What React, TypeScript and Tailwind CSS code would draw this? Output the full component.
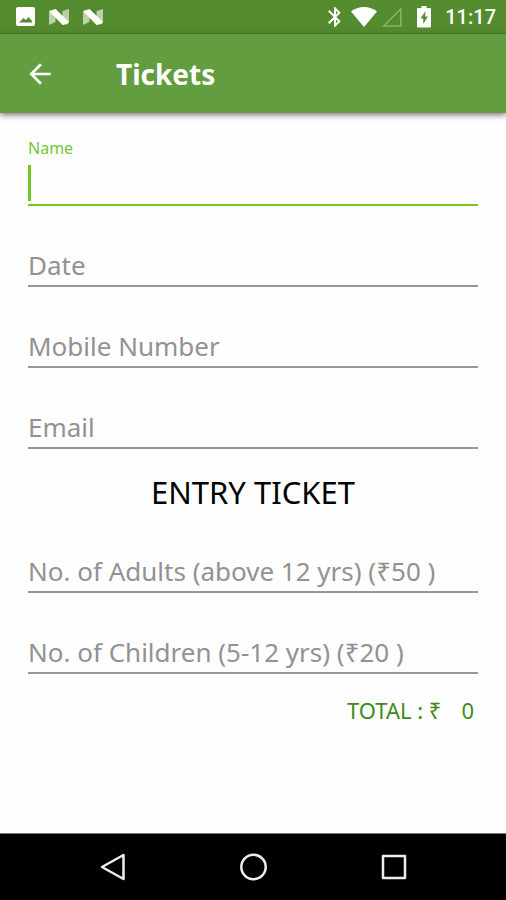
import React from 'react';
import { MdArrowBack, MdBluetooth } from 'react-icons/md';

const NougatIcon = () => (
  <svg className="h-[18px] w-[22px]" viewBox="0 0 22 18" fill="#fff">
    <path d="M1 3.5V17l6.500-3V5z" opacity=".6" />
    <path d="M14.500 3 21 1v13l-6.500-2z" opacity=".6" />
    <path d="M1 3 7.500 1 21 14l-1.500 2-5 1z" />
  </svg>
);

const StatusBar = () => (
  <div className="flex h-[34px] items-center justify-between border-b border-[#4c802b] bg-[#558b2f] pr-[10px] pl-4 text-white">
    <div className="flex items-center gap-3">
      <svg className="mr-px h-[19px] w-[19px]" viewBox="0 0 19 19" fill="#fff">
        <path
          fillRule="evenodd"
          d="M2 0h15a2 2 0 0 1 2 2v15a2 2 0 0 1-2 2H2a2 2 0 0 1-2-2V2a2 2 0 0 1 2-2zM3 15.500h13V14l-3.500-4-2.500 3-2.500-2z"
        />
      </svg>
      <NougatIcon />
      <NougatIcon />
    </div>
    <div className="flex items-center">
      <MdBluetooth className="mr-1 h-6 w-6" />
      <svg className="mr-[5px] h-5 w-[26px]" viewBox="0 0 26 20" fill="#fff">
        <path d="M0 4.500C7-1.500 19-1.500 26 4.500L13 20z" />
      </svg>
      <svg className="mr-[15px] h-5 w-5" viewBox="0 0 20 20" fill="none" stroke="#8ab36d" strokeWidth="1.500">
        <path d="M18.800 2v17H1.800z" />
      </svg>
      <svg className="mr-[14px] h-[22px] w-[14px]" viewBox="0 0 14 22" fill="#fff">
        <path
          fillRule="evenodd"
          d="M4.500 0h5v2H13a1 1 0 0 1 1 1v17.500a1 1 0 0 1-1 1H1a1 1 0 0 1-1-1V3a1 1 0 0 1 1-1h3.500zM8.500 5 3.500 12.500h2.800V18l4.500-7.500H8z"
        />
      </svg>
      <span className="font-['Roboto',sans-serif] text-xl leading-6 font-medium">11:17</span>
    </div>
  </div>
);

const AppBar = () => (
  <header className="flex h-[79px] items-center bg-[#629d40] pl-6 text-white shadow-[0_2px_6px_rgba(40,20,50,0.6)]">
    <button type="button" aria-label="Back">
      <MdArrowBack className="h-8 w-8" />
    </button>
    <h1 className="ml-[60px] text-[28px] leading-9 font-bold">Tickets</h1>
  </header>
);

type FieldProps = {
  id: string;
  label: string;
  type?: string;
};

const Field = ({ id, label, type = 'text' }: FieldProps) => (
  <div className="flex h-[81px] flex-col justify-end">
    <input
      id={id}
      type={type}
      aria-label={label}
      placeholder={label}
      className="h-[42px] w-full border-b-2 border-[#979797] text-[26px] text-[#333] outline-none placeholder:text-[#929292]"
    />
  </div>
);

const NameField = () => (
  <div className="relative flex h-[81px] flex-col justify-end gap-2">
    <label htmlFor="name" className="text-base leading-4 text-[#76c736]">
      Name
    </label>
    <input
      id="name"
      type="text"
      className="h-[42px] w-full border-b-2 border-[#76c422] text-[26px] text-[#333] caret-transparent outline-none"
    />
    <span className="absolute bottom-[5px] left-0 h-9 w-[3px] bg-[#76c422]" />
  </div>
);

const NavBar = () => (
  <nav className="flex h-[67px] items-center justify-center gap-[109px] border-t border-[#777] bg-black">
    <button type="button" aria-label="Back">
      <svg className="h-8 w-8" viewBox="0 0 32 32" fill="none" stroke="#eee" strokeWidth="2.500" strokeLinejoin="round">
        <path d="M27.500 4v24L6 16z" />
      </svg>
    </button>
    <button type="button" aria-label="Home">
      <svg className="h-8 w-8" viewBox="0 0 32 32" fill="none" stroke="#eee" strokeWidth="2.500">
        <circle cx="16.500" cy="16" r="12.200" />
      </svg>
    </button>
    <button type="button" aria-label="Recent apps">
      <svg className="h-8 w-8" viewBox="0 0 32 32" fill="none" stroke="#eee" strokeWidth="2.500" strokeLinejoin="round">
        <path d="M5 5h22v22H5z" />
      </svg>
    </button>
  </nav>
);

const App = () => (
  <div className="flex min-h-screen flex-col bg-[#fefefe] font-['Comic_Sans_MS','Noto_Sans',sans-serif]">
    <StatusBar />
    <AppBar />
    <main className="flex-1 px-7 pt-3">
      <form>
        <NameField />
        <Field id="date" label="Date" />
        <Field id="mobile" label="Mobile Number" type="tel" />
        <Field id="email" label="Email" type="email" />
        <h2 className="pt-[23px] text-center text-[31px] leading-10 text-black">ENTRY TICKET</h2>
        <Field id="adults" label="No. of Adults (above 12 yrs) (₹50 )" />
        <Field id="children" label="No. of Children (5-12 yrs) (₹20 )" />
        <div className="flex justify-end gap-5 pt-6 pr-1 text-[22px] leading-6 text-[#3f8a1c]">
          <span>TOTAL : ₹</span>
          <span>0</span>
        </div>
      </form>
    </main>
    <NavBar />
  </div>
);

export default App;
